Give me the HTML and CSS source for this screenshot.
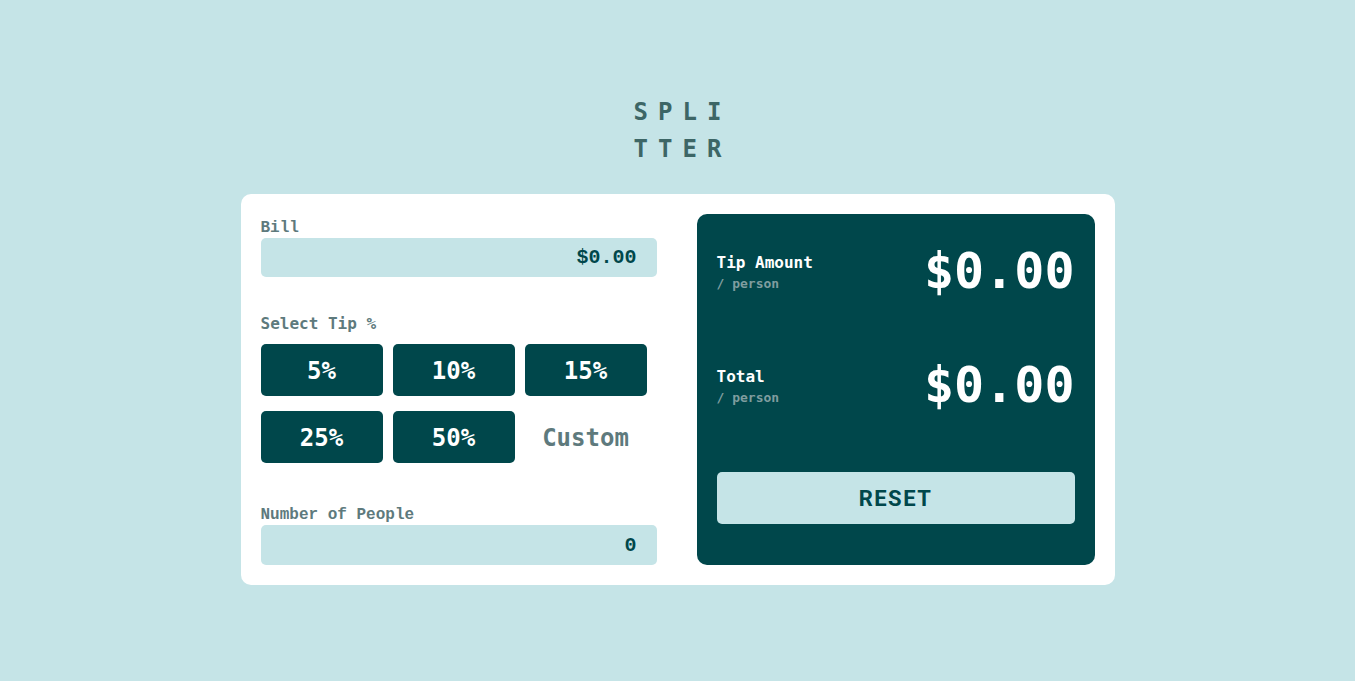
FILE: index.html
```html
<!DOCTYPE html>
<html lang="en">
<head>
<meta charset="utf-8">
<title>Splitter</title>
<link rel="stylesheet" href="styles.css">
</head>
<body>
<main class="page">
  <h1 class="logo">SPLI<br>TTER</h1>
  <section class="card">
    <div class="inputs">
      <label class="field-label serif-label">Bill</label>
      <div class="field"><span class="field-value">$0.00</span></div>

      <label class="field-label tip-label">Select Tip %</label>
      <div class="tips">
        <button class="tip">5%</button>
        <button class="tip">10%</button>
        <button class="tip">15%</button>
        <button class="tip">25%</button>
        <button class="tip">50%</button>
        <div class="custom">Custom</div>
      </div>

      <label class="field-label serif-label people-label">Number of People</label>
      <div class="field people-field"><span class="field-value">0</span></div>
    </div>

    <div class="results">
      <div class="result-row">
        <div class="result-text">
          <div class="result-title">Tip Amount</div>
          <div class="result-sub">/ person</div>
        </div>
        <div class="result-amount">$0.00</div>
      </div>
      <div class="result-row second">
        <div class="result-text">
          <div class="result-title">Total</div>
          <div class="result-sub">/ person</div>
        </div>
        <div class="result-amount">$0.00</div>
      </div>
      <button class="reset">RESET</button>
    </div>
  </section>
</main>
</body>
</html>
```

FILE: styles.css
```css
* { box-sizing: border-box; }

html, body {
  margin: 0;
  padding: 0;
  background: #c5e4e7;
}

body {
  font-family: "DejaVu Sans Mono", "Liberation Mono", monospace;
}

.page {
  display: flex;
  flex-direction: column;
  align-items: center;
  padding-top: 94px;
}

.logo {
  margin: 0 0 26px 10px;
  font-size: 24px;
  line-height: 37px;
  letter-spacing: 10px;
  font-weight: bold;
  color: #3d6666;
  text-align: center;
}

.card {
  width: 874px;
  background: #ffffff;
  border-radius: 10px;
  padding: 20px;
  display: flex;
  gap: 40px;
}

.inputs {
  width: 396px;
  display: flex;
  flex-direction: column;
}

.field-label {
  display: block;
  font-size: 16px;
  line-height: 20px;
  padding-top: 4px;
  font-weight: bold;
  color: #5e7a7d;
}

.serif-label {
  font-family: "Liberation Mono", "Courier New", monospace;
}

.tip-label {
  margin-top: 33px;
  margin-bottom: 10px;
}

.people-label {
  margin-top: 38px;
}

.field {
  height: 39px;
  background: #c5e4e7;
  border-radius: 5px;
  display: flex;
  align-items: center;
  justify-content: flex-end;
  padding-right: 20px;
}

.people-field {
  height: 40px;
}

.field-value {
  font-family: "Liberation Mono", "Courier New", monospace;
  font-weight: bold;
  font-size: 20px;
  color: #00474b;
}

.tips {
  display: grid;
  grid-template-columns: repeat(3, 122px);
  grid-auto-rows: 52px;
  column-gap: 10px;
  row-gap: 15px;
}

.tip {
  border: none;
  border-radius: 5px;
  background: #00474b;
  color: #ffffff;
  font-family: "DejaVu Sans Mono", monospace;
  font-weight: bold;
  font-size: 24px;
  padding: 2px 0 0;
  cursor: pointer;
}

.custom {
  display: flex;
  align-items: center;
  justify-content: center;
  padding-top: 2px;
  font-family: "DejaVu Sans Mono", monospace;
  font-weight: bold;
  font-size: 24px;
  color: #5e7a7d;
}

.results {
  width: 398px;
  background: #00474b;
  border-radius: 10px;
  padding: 32px 20px 41px;
  display: flex;
  flex-direction: column;
}

.result-row {
  display: flex;
  align-items: center;
  justify-content: space-between;
  height: 50px;
}

.result-row.second {
  margin-top: 64px;
}

.result-text {
  padding-top: 6px;
}

.result-title {
  color: #ffffff;
  font-size: 16px;
  font-weight: bold;
  line-height: 20px;
}

.result-sub {
  color: #7f9d9f;
  font-size: 13px;
  font-weight: bold;
  line-height: 22px;
}

.result-amount {
  color: #ffffff;
  font-size: 50px;
  font-weight: bold;
  line-height: 50px;
}

.reset {
  margin-top: auto;
  height: 52px;
  border: none;
  border-radius: 5px;
  background: #c5e4e7;
  color: #00474b;
  font-family: Roboto, "Liberation Sans", sans-serif;
  font-weight: bold;
  font-size: 22px;
  letter-spacing: 1.5px;
  cursor: pointer;
}
```
